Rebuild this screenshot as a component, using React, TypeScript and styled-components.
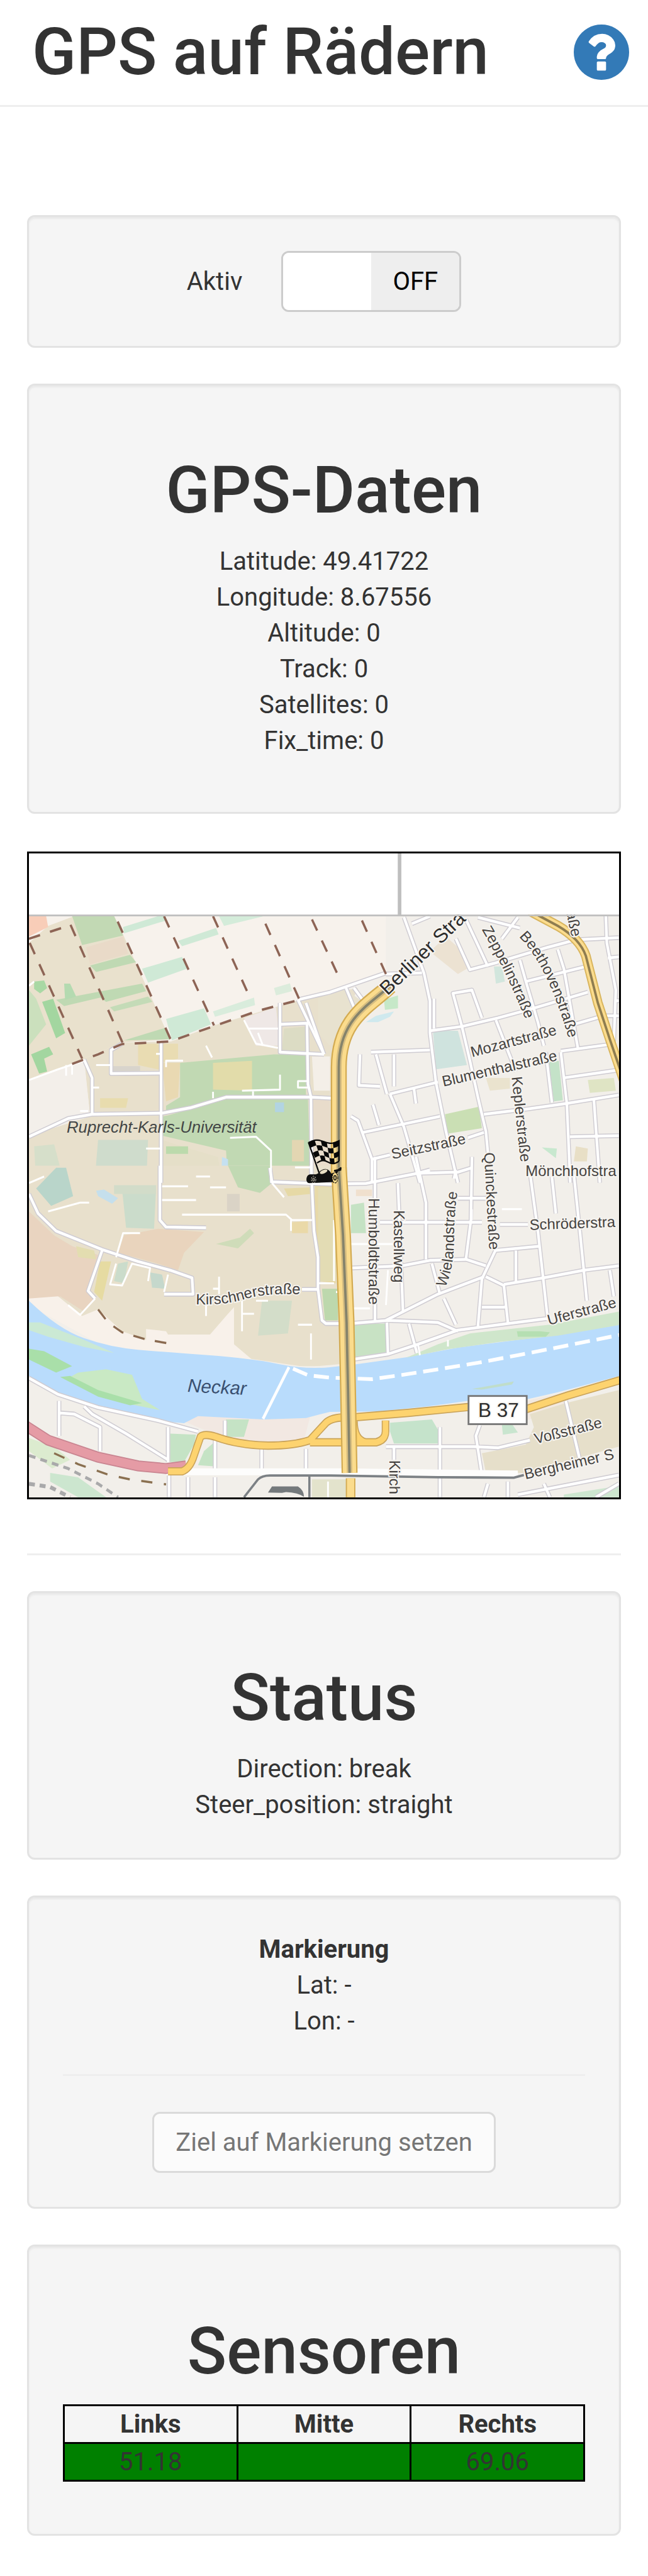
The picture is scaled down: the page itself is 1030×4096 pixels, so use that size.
import React, { useState } from "react";
import styled, { createGlobalStyle } from "styled-components";

const GlobalStyle = createGlobalStyle`
  *, *::before, *::after { box-sizing: border-box; }
  body {
    margin: 0;
    background: #fff;
    color: #333;
    font-family: Roboto, "Liberation Sans", sans-serif;
    font-size: 40px;
    line-height: 57px;
  }
`;

/* ---------- page frame ---------- */

const Header = styled.header`
  display: flex;
  align-items: center;
  justify-content: space-between;
  padding: 26px 30px 28px 51px;
  border-bottom: 3px solid #eee;
`;

const Title = styled.h1`
  margin: 0;
  font-size: 103px;
  line-height: 113px;
  font-weight: 500;
`;

const HelpLink = styled.a`
  display: flex;
  color: #337ab7;
`;

const HelpIcon = styled.svg`
  width: 88px;
  height: 88px;
  fill: currentColor;
`;

const Main = styled.main`
  display: flex;
  flex-direction: column;
  gap: 57px;
  padding: 172px 43px 61px;
`;

const Well = styled.section`
  padding: 54px;
  border: 3px solid #e3e3e3;
  border-radius: 12px;
  background: #f5f5f5;
  box-shadow: inset 0 3px 3px rgba(0, 0, 0, 0.05);
  text-align: center;
`;

const WellTitle = styled.h1`
  margin: 56px 0 28px;
  font-size: 103px;
  line-height: 113px;
  font-weight: 500;
`;

const Lines = styled.p<{ $spaced?: boolean }>`
  margin: 0 0 ${(p) => (p.$spaced ? "31px" : "2px")};
`;

const Line = styled.span`
  display: block;
`;

const Rule = styled.hr`
  width: 100%;
  height: 3px;
  margin: 0;
  border: 0;
  background: #eee;
`;

/* ---------- switch ---------- */

const SwitchRow = styled.div`
  display: flex;
  align-items: center;
  justify-content: center;
  gap: 62px;
`;

const SwitchTrack = styled.span`
  position: relative;
  display: flex;
  width: 286px;
  height: 97px;
  overflow: hidden;
  border: 3px solid #ccc;
  border-radius: 12px;
`;

const SwitchHalf = styled.span<{ $kind: "knob" | "off" | "on" }>`
  display: flex;
  flex: 1;
  align-items: center;
  justify-content: center;
  background: ${(p) => ({ knob: "#fff", off: "#eee", on: "#337ab7" })[p.$kind]};
  color: ${(p) => (p.$kind === "on" ? "#fff" : "#000")};
`;

const SwitchInput = styled.input`
  position: absolute;
  inset: 0;
  width: 100%;
  height: 100%;
  margin: 0;
  opacity: 0;
  cursor: pointer;
`;

/* ---------- map ---------- */

const MapFrame = styled.figure`
  margin: 3px 0 29px;
  border: 3px solid #000;
`;

const MapDrawing = styled.svg`
  display: block;
  width: 100%;
  height: auto;
`;

const Casing = styled.g`
  fill: none;
  stroke: #cfccd2;
  stroke-linejoin: round;
`;

const Surface = styled.g`
  fill: none;
  stroke: #fff;
  stroke-linejoin: round;
`;

const Street = styled.text`
  font-family: "Liberation Sans", Arial, sans-serif;
  font-size: 25px;
  fill: #45423f;
  stroke: #f6f4f0;
  stroke-width: 4px;
  paint-order: stroke;
`;

const Place = styled(Street)`
  font-size: 27px;
  font-style: italic;
  fill: #434646;
  stroke: none;
`;

const Water = styled(Place)`
  font-size: 31px;
  fill: #3a5070;
`;

const BigStreet = styled(Street)`
  font-size: 33px;
  fill: #2c2c2c;
`;

/* ---------- marker and sensors ---------- */

const MarkRule = styled(Rule)`
  margin: 56px 0 57px;
`;

const TargetButton = styled.button`
  padding: 17px 34px;
  border: 3px solid #ccc;
  border-radius: 12px;
  background: #fff;
  color: #333;
  font: inherit;
  opacity: 0.65;
  vertical-align: top;
`;

const SensorTable = styled.table`
  width: 100%;
  margin-bottom: 29px;
  border-collapse: collapse;
  table-layout: fixed;
`;

const HeadCell = styled.th`
  padding: 0;
  border: 3px solid #000;
  font-weight: 700;
`;

const ValueCell = styled.td`
  height: 60px;
  padding: 0;
  border: 3px solid #000;
  background: #008000;
`;

/* ---------- map data ---------- */

type Sheet = "nw" | "ne" | "sw" | "se";
type Area = [fill: string, d: string];

const SHEETS: Record<Sheet, string> = {
  nw: "translate(30 1400) scale(0.3333 0.3571)",
  ne: "translate(530 1400) scale(0.3333 0.3571)",
  sw: "translate(30 1950) scale(0.3333 0.3635)",
  se: "translate(530 1950) scale(0.3333 0.3635)",
};
const ORDER: Sheet[] = ["nw", "ne", "sw", "se"];

const AREAS: Record<Sheet, Area[]> = {
  nw: [
    ["#f7f2ec", "M54 355H1840V620L1410 745L980 865L765 940L54 1120Z"],
    ["#e8e0cc", "M54 1380L360 1290L330 1020L520 945L765 940L980 865L1410 745L1700 690L1600 900L1575 1100V1600H54Z"],
    ["#e9e1cd", "M54 480L150 400L280 355H480L525 440L640 680L760 930L520 945L330 1020L54 1120Z"],
    ["#f8cdb8", "M54 355H140L150 405L54 450Z"],
    ["#c2d9b4", "M270 355H480L525 445L320 490Z"],
    ["#bfd9b3", "M360 585L560 535L590 570L390 615Z"],
    ["#bfd9b3", "M190 745L620 670L640 705L440 755L410 735L230 775Z"],
    ["#c4dbb7", "M460 780L650 730L672 755L480 800Z"],
    ["#bfd9b3", "M530 935L740 875L760 930Z"],
    ["#e9dac8", "M340 500L525 450L550 530L360 580Z"],
    ["#cfe9d6", "M525 405L700 355H735L740 375L530 435Z"],
    ["#cfe9d6", "M800 470L990 410L1003 440L820 495Z"],
    ["#cfe9d6", "M620 600L820 545L845 600L650 665Z"],
    ["#cfe9d6", "M740 835L930 785L965 860L770 935Z"],
    ["#d4ecda", "M1005 355H1230L1030 400Z"],
    ["#d9ecdc", "M975 800L1180 735L1185 770L985 825Z"],
    ["#dcecdc", "M1280 690L1360 668L1370 705L1290 725Z"],
    ["#cbe0bd", "M54 700L90 740L140 860L54 960Z"],
    ["#a9d8a4", "M80 660L130 655L145 690L110 715L80 695Z"],
    ["#a3d6a0", "M120 755L175 740L235 900L190 925Z"],
    ["#a3d6a0", "M65 1000L155 965L175 1000L130 1020L145 1080L105 1090Z"],
    ["#b4dab0", "M230 670H260L290 730L235 745Z"],
    ["#f3efea", "M54 1120L330 1030L360 1290L54 1380Z"],
    ["#c1d9b3", "M810 1040L1280 1000H1440V1200H1040L960 1215L740 1270V1240L810 1200Z"],
    ["#c1d9b3", "M750 1285L1040 1210H1450L1462 1600H1050L1040 1450L720 1380V1290Z"],
    ["#e2dcaa", "M975 1040L1170 1030V1170L975 1165Z"],
    ["#e9d9b2", "M720 1040H810L800 1200L740 1220Z"],
    ["#e9dcb2", "M600 950H800V1020L720 1040V1075L600 1050Z"],
    ["#e8dcae", "M410 1205H550L540 1250H410Z"],
    ["#d8d4cc", "M470 1055H610V1082H470Z"],
    ["#cfdccc", "M400 1400H650L640 1620H380Z"],
    ["#d6dfca", "M80 1430L180 1420L230 1600H90Z"],
    ["#b2d4e2", "M1285 1225H1330V1270H1285Z"],
    ["#e5dfc8", "M720 1400L820 1430L1000 1480L1020 1600H730Z"],
    ["#bcdaac", "M740 1430H850V1465H740Z"],
    ["#c5e0f0", "M1020 1480L1050 1490V1600H1015Z"],
    ["#efe8e6", "M1130 830L1290 780L1310 960H1190Z"],
    ["#dcdcc4", "M1330 880L1440 870V985H1320Z"],
    ["#f4efe8", "M1470 1010H1560V1170H1480Z"],
    ["#e3d6b2", "M1370 1400H1430V1500H1370Z"],
  ],
  ne: [
    ["#e8e2cf", "M0 740L130 690L230 760L110 880L60 960L0 900Z"],
    ["#ece2d2", "M640 450L700 500L745 600L700 625L560 520Z"],
    ["#e8dccb", "M-30 1210H60V1600H-30Z"],
    ["#cfe3de", "M575 890H700L745 1050L590 1070Z"],
    ["#cadfb4", "M635 1280L805 1245L820 1345L650 1370Z"],
    ["#c4e2c8", "M1155 1035L1205 1030L1225 1215L1180 1220Z"],
    ["#d2e6dd", "M880 590H920L935 660L890 670Z"],
    ["#c6e8c8", "M330 745L400 725V785L335 792Z"],
    ["#cfe9ee", "M240 850L290 820L380 800L360 825L300 850Z"],
    ["#dfe4c4", "M1350 1120L1480 1110L1490 1170L1360 1180Z"],
    ["#c8e8cf", "M1120 1435L1195 1440L1190 1485Z"],
    ["#e8dfc6", "M1290 1430L1350 1440L1345 1500L1280 1500Z"],
    ["#eae3ce", "M840 1110H960V1160L860 1170Z"],
  ],
  sw: [
    ["#e8e0cc", "M54 -20H1620V890L1450 905L1150 865L750 830L450 810L54 600Z"],
    ["#b9d5ca", "M90 85L190 -10H240L275 120L165 165Z"],
    ["#cbdccb", "M520 90L690 85L680 270L540 265Z"],
    ["#d2dcc9", "M480 70H690V110H480Z"],
    ["#c5dfec", "M390 95L430 90L500 130L470 155L400 120Z"],
    ["#c1d9b3", "M1050 -20H1262L1270 60L1210 105L1100 80Z"],
    ["#e9d4c0", "M54 190L180 300L270 350L400 390L350 550L380 600L330 650L210 580L120 610L54 590Z"],
    ["#e9d4bd", "M530 300L700 270L930 285L830 380L800 460L700 430L500 380Z"],
    ["#e3ddb0", "M290 350L380 370L390 410L300 400Z"],
    ["#e6dba2", "M410 420H465L420 600L380 560Z"],
    ["#e6d9a6", "M1330 85L1460 80V110L1350 120Z"],
    ["#e7d9a8", "M1485 60L1590 30V520L1510 510L1480 220Z"],
    ["#ead9a8", "M1370 240L1450 235V290H1370Z"],
    ["#cfdcb9", "M990 340L1110 310L1160 270L1180 290L1100 360Z"],
    ["#d3ddc9", "M1220 600H1370L1350 750L1200 760Z"],
    ["#cbdccb", "M500 430L550 420L530 520L480 510Z"],
    ["#c5d8cc", "M660 470L720 480L735 545L670 540Z"],
    ["#dad3c6", "M1045 110H1108V190H1045Z"],
    ["#bdd8ad", "M1520 545H1600V690H1535Z"],
    ["#f8f1ea", "M54 590L200 580L320 670L400 640L520 740L640 780V730L740 740L750 755H960L1050 660L1080 630V800L1170 870L750 840L450 820L54 620Z"],
    ["#f2efea", "M54 900H3050V1520H54Z"],
    ["#f2e8e2", "M820 1150L900 1125L1460 1135L1430 1240L1200 1250L1000 1220Z"],
    ["#b9dcfc", "M54 600Q200 730 330 772T600 825T950 850T1300 890T1560 905L1680 893L1940 860L2200 815L2500 780L2700 758L3010 710V945L2700 1020L2500 1062L2250 1060L2050 1085L1800 1108L1560 1110L1440 1138L1230 1145L900 1130L830 1162L740 1155L500 1112L300 1070L150 1010L54 945Z"],
    ["#cbe9d4", "M54 700H110L330 780L480 840L330 812L150 765L54 735Z"],
    ["#a9dfa9", "M54 820L130 832L270 900L190 930L54 870Z"],
    ["#c9e9c4", "M260 950L300 930L440 915L570 940L620 1050L710 1102L560 1075L400 1030Z"],
    ["#a9dfa9", "M210 950L260 945L400 1010L620 1070L560 1080L400 1040Z"],
    ["#c5e3c5", "M760 1210L890 1215L880 1260L830 1340H760Z"],
    ["#c5e3c5", "M1040 1145H1155L1130 1225H1035Z"],
    ["#c5e3c5", "M930 1290L980 1250V1360L900 1355Z"],
    ["#dcebcf", "M54 1230L180 1270L260 1330L170 1370L54 1290Z"],
    ["#cce6cf", "M160 1390L300 1410L440 1502H300L160 1430Z"],
    ["#e3e3cc", "M1470 1420H1640V1502H1470Z"],
  ],
  se: [
    ["#e3dcb4", "M0 80H80L90 510H0Z"],
    ["#c5e2c4", "M165 160L230 150L240 290H165Z"],
    ["#c8e2c4", "M165 710L335 705L345 835L170 860Z"],
    ["#cfe6cb", "M440 862L600 800L760 750L1160 710L1505 650V712L1200 760L900 790L650 822Z"],
    ["#b5dfb2", "M995 740H1110L1160 745L1140 765H1000Z"],
    ["#c5e3cb", "M360 1160L570 1145L605 1200V1255H380L360 1200Z"],
    ["#c9e5cf", "M920 1170L970 1165L1000 1205L925 1215Z"],
    ["#f2e9e0", "M1045 1060L1240 1020V1080L1045 1150Z"],
    ["#e6dfca", "M820 1300L1040 1260L1080 1180L1060 1120L1240 1070L1505 1010V1270L1030 1390H840Z"],
    ["#c0ddca", "M770 1005L980 970L970 985L820 1008Z"],
    ["#f0e0ce", "M190 90H270V120H190Z"],
    ["#cde6cf", "M1230 1490L1505 1450V1502H1230Z"],
  ],
};

const ROADS: Record<Sheet, string[]> = {
  nw: [
    "M54 1385L250 1300L370 1280L720 1275L860 1250L1040 1200H1460L1570 1205",
    "M330 1025L370 1110V1280",
    "M715 940V1600",
    "M520 950L465 980V1090L715 1088",
    "M1400 745L1530 1000",
    "M1400 745L1560 710L1840 620",
    "M1310 760V990L1530 1000",
    "M1310 860L1445 855L1450 1140L1465 1200L1468 1600",
  ],
  ne: [
    "M430 360L530 620L560 750V900L590 1130L640 1360L700 1600",
    "M340 625L520 620",
    "M740 370L850 590",
    "M690 460L760 605L880 575L1150 500L1290 465L1505 455",
    "M1000 360L920 460M800 360L1010 410M470 390L560 355",
    "M720 870L675 715L770 700L820 830",
    "M560 890L720 870L900 830L1060 790L1350 710",
    "M720 870L760 1030L800 1200L840 1360L850 1460",
    "M265 990L560 980M210 1000L205 1145L310 1150M380 1000V1150M290 1000L345 1185",
    "M360 1185L600 1130M1215 985L1450 955",
    "M360 1185L430 1340L510 1600",
    "M225 1365L430 1325L610 1290",
    "M165 1290L200 1310L270 1490V1600",
    "M270 1490L360 1470M750 1390L830 1365",
    "M480 1160L490 1230M275 1235L305 1330",
    "M830 1280L1050 1255L1240 1230L1505 1190",
    "M890 840L990 1080",
    "M1010 560L1040 660L1340 590M1040 660L1100 850L1130 960",
    "M1200 510L1230 600L1300 970M1280 860L1430 820H1505",
    "M1140 990L1170 1225M1215 990L1245 1230L1262 1600",
    "M1230 1110L1490 1075M1380 1210L1410 1600M1260 1385L1505 1380",
    "M1440 355L1445 480L1490 700L1480 940M1450 550L1505 545M1490 750H1505",
    "M140 690L180 780M180 690L235 760M-60 760L30 1000",
    "M580 740V880",
  ],
  sw: [
    "M54 110L100 200L190 280L420 365L600 420L760 460L870 495L875 570H730",
    "M420 370L350 555L385 590",
    "M709 -20V230L740 262L940 265",
    "M1260 -10L1270 55L1560 65L1740 62L2000 15L2060 0",
    "M1465 -20L1480 280L1500 400V545L1520 690L1540 705H1620",
    "M1420 548H1500",
    "M54 955L200 1030L400 1090L700 1150L900 1200",
    "M205 1060V1220M210 1115L280 1120L410 1180V1290",
    "M330 1085L370 1120L540 1210L750 1330M750 1180V1340",
    "M985 1240V1385M1218 1280V1385M1440 1280V1385M1035 1150V1230",
    "M755 1400V1502M850 1410V1502M985 1410V1502",
  ],
  se: [
    "M500 15L700 10L770 -10",
    "M285 -60V690M400 60L425 650",
    "M490 -60L540 150V410M770 -60L765 230L740 410",
    "M310 240H820M910 250H1050M1060 10L1100 280L1150 690M1170 30L1190 200M1280 20L1310 280L1345 600",
    "M160 450L420 440L560 415L740 410L840 440",
    "M890 365L820 500L800 720M840 490L930 530L950 700M820 630H935",
    "M340 690L600 570L830 490M630 590L690 710M570 430L610 570",
    "M160 705L350 690L600 700L700 740",
    "M170 870L350 845L500 800L700 735L950 705L1160 680",
    "M930 525L1130 495L1330 460L1505 440M880 370L1110 350M990 370V510M1460 460L1480 580",
    "M345 700L350 840M455 705L495 840M700 130H850M690 0L680 40",
    "M340 1270H780L900 1275L1060 1240M610 1180V1502M810 1170L790 1220L820 1400",
    "M1240 1060L1310 1330M380 1270V1330M830 1502L850 1440M950 1430V1502",
    "M1130 1440L1160 1502M1000 1490L1505 1400M1390 1502L1505 1440",
  ],
};

const LANES: Record<Sheet, string> = {
  nw: "M1130 840L1190 950L1300 970M1150 880H1300M1200 900L1225 960M1450 1125H1400V1155H1450M1120 1170L1310 1165V1095M975 1175V1205M1175 1170V1200M740 1060V1030H825M690 998H720M54 1120L200 1070L330 1030M1060 1390L1190 1385L1265 1450V1600M640 1440H715M1385 1528H1460M370 1155H405M310 1265H350M390 1050H460M240 1050V1100M270 1045V1095M54 680L80 660M940 960L970 1015",
  ne: "",
  sw: "M490 400L525 290H610M720 138H890M720 75H850M890 30H960M960 80H1040M1120 600V740M1120 660H1180M1465 750V870M940 610V670M1005 490V570M975 545H1005M820 205H1340L1370 230H1470M1365 230V280M150 190L310 150H355M730 560L750 480M490 430L460 525L520 530L570 430L660 450L650 510M1270 60L1330 125M54 60L130 30M1400 710H1470M1190 600H1250M385 590L310 665L250 620",
  se: "M160 340H420M160 560H90M160 635H260M350 460L340 620M650 780V810M500 800L510 850M0 520H80M80 230V510M770 180V230M920 180H1020M50 1430V1502",
};

const TRACKS: string[] = [
  "M54 460L260 397",
  "M58 480L320 1020",
  "M262 395L522 945",
  "M498 380L765 935",
  "M730 355L980 865",
  "M975 355L1145 705",
  "M1237 390L1405 740",
  "M1470 370L1600 630",
  "M1720 375L1840 625",
  "M270 1045L400 1000L520 952L760 940L980 868L1200 797L1410 745",
];

const BERLINER_N = "M360 680C260 770 105 830 104 1060V1560";
const BERLINER_S = "M104 -10L125 300L143 700L150 1000L158 1390";
const EAST_ROAD = "M1060 330L1200 400Q1310 460 1340 540L1400 760L1460 930L1540 1150";
const B37_ROADS =
  "M750 1383H820Q860 1370 880 1310L912 1225Q930 1208 990 1225Q1100 1262 1250 1265Q1380 1265 1460 1240L1540 1160Q1570 1135 1640 1135H1680L1950 1115L2250 1088L2540 1098L2750 1035L3010 965M1460 1250H1790Q1838 1240 1838 1200V1150M1680 1150Q1680 1240 1740 1250";

/* straight labels: x, y, turn, text */
const LABELS: [number, number, number, string][] = [
  [787, 1762, -15, "Mozartstraße"],
  [739, 1811, -13, "Blumenthalstraße"],
  [654, 1932, -12, "Seitzstraße"],
  [853, 1795, 84, "Keplerstraße"],
  [876, 1960, 0, "Mönchhofstra"],
  [883, 2050, -2, "Schröderstra"],
  [807, 1921, 87, "Quinckestraße"],
  [614, 1997, 90, "Humboldtstraße"],
  [656, 2017, 90, "Kastellweg"],
  [915, 2209, -15, "Uferstraße"],
  [893, 2407, -14, "Voßstraße"],
  [876, 2466, -13, "Bergheimer S"],
  [649, 2434, 90, "Kirch"],
  [944, 1520, 78, "aße"],
];

/* labels that bend with their street: id, line, text */
const BENT: [string, string, string][] = [
  ["zeppelin", "M803 1549Q848 1625 882 1715", "Zeppelinstraße"],
  ["beethoven", "M865 1561Q915 1610 952 1745", "Beethovenstraße"],
  ["wieland", "M742 2146Q757 2115 757 2060T768 1960", "Wielandstraße"],
  ["kirschner", "M326 2174Q375 2176 410 2165T512 2158", "Kirschnerstraße"],
];

const Sheets = ({ draw }: { draw: (sheet: Sheet) => React.ReactNode }) => (
  <>
    {ORDER.map((s) => (
      <g key={s} transform={SHEETS[s]}>
        {draw(s)}
      </g>
    ))}
  </>
);

const flagPoint = (u: number, v: number) => {
  const x = 103 + 152 * u + 42 * v * (1 - u);
  const y = 103 - 9 * u + 102 * v - 10 * Math.sin(2 * Math.PI * u);
  return `${x.toFixed(1)} ${y.toFixed(1)}`;
};

const flagCells = () => {
  const cells: string[] = [];
  for (let row = 0; row < 4; row++) {
    for (let col = 0; col < 5; col++) {
      if ((row + col) % 2) continue;
      const [a, b, m] = [col / 5, (col + 1) / 5, (col + 0.5) / 5];
      const [t, d] = [row / 4, (row + 1) / 4];
      cells.push(
        `M${[flagPoint(a, t), flagPoint(m, t), flagPoint(b, t), flagPoint(b, d), flagPoint(m, d), flagPoint(a, d)].join("L")}Z`
      );
    }
  }
  return cells.join("");
};

const flagEdge = (v: number) =>
  Array.from({ length: 21 }, (_, i) => flagPoint(i / 20, v)).join("L");

const Racer = () => (
  <g transform="translate(480 1870) scale(0.3333)">
    <path d={flagCells()} fill="#080808" />
    <path
      d={`M${flagEdge(0)}L${flagPoint(1, 1)}M${flagEdge(1)}M102 101L158 262`}
      fill="none"
      stroke="#080808"
      strokeWidth="7"
    />
    <path
      d="M92 290Q92 266 110 262H140L152 256Q164 236 188 235Q208 238 216 258L240 252L229 247L231 240L250 236L262 226L268 228L266 243L250 247L244 262V300L105 306Q94 304 92 290Z"
      fill="#101010"
    />
    <ellipse cx="178" cy="249" rx="20" ry="9" transform="rotate(-22 178 249)" fill="#e9dfc4" />
    <g fill="#111" stroke="#f1ead8" strokeWidth="3">
      <ellipse cx="128" cy="288" rx="11" ry="17" strokeDasharray="7 5" />
      <ellipse cx="128" cy="288" rx="4" ry="8" />
      <ellipse cx="235" cy="279" rx="14" ry="26" fill="#fbdc8d" stroke="#111" strokeWidth="4" strokeDasharray="8 4" />
      <ellipse cx="235" cy="279" rx="6" ry="11" fill="#fbdc8d" stroke="#111" strokeWidth="5" />
    </g>
  </g>
);

const CityMap = () => (
  <MapDrawing viewBox="48 1422 984 1074" role="img" aria-label="Karte">
    <rect x="48" y="1422" width="984" height="1074" fill="#f2efea" />
    <Sheets draw={(s) => AREAS[s].map(([fill, d], i) => <path key={i} fill={fill} d={d} />)} />

    <Casing strokeWidth="22">
      <Sheets draw={(s) => ROADS[s].map((d, i) => <path key={i} d={d} />)} />
    </Casing>
    <Surface strokeWidth="13">
      <Sheets draw={(s) => ROADS[s].map((d, i) => <path key={i} d={d} />)} />
    </Surface>
    <Surface strokeWidth="9">
      <Sheets draw={(s) => <path d={LANES[s]} />} />
    </Surface>

    <g transform={SHEETS.nw} fill="none" stroke="#8d6455" strokeWidth="11" strokeDasharray="58 52">
      {TRACKS.map((d) => (
        <path key={d} d={d} />
      ))}
    </g>

    <g transform={SHEETS.sw} fill="none">
      <path d="M740 1385H1620L2500 1395" stroke="#fdfdfc" strokeWidth="32" />
      <path
        d="M1130 1502L1200 1420Q1220 1402 1260 1402H1560L2100 1410L2480 1412L2530 1400M1457 1400V1502"
        stroke="#7c8185"
        strokeWidth="11"
      />
      <path d="M1250 1480L1270 1452H1400Q1430 1470 1430 1500Q1400 1480 1340 1478L1320 1482Z" fill="#74797c" />
      <path d="M1355 905L1225 1142" stroke="#fff" strokeWidth="14" />
      <path
        d="M1375 912L1450 942L1560 953L1770 960L1910 942L2100 915L2300 885L2500 850L2750 805L3010 757"
        stroke="#fff"
        strokeWidth="17"
        strokeDasharray="76 34"
      />
      <path d="M400 640L450 700L520 745L640 778L760 797" stroke="#8a6a50" strokeWidth="10" strokeDasharray="58 52" />
      <path d="M180 1300L300 1350L450 1398L560 1420L740 1443" stroke="#8a7050" strokeWidth="10" strokeDasharray="56 58" />
      <path d="M54 1310L250 1370L400 1440L500 1502" stroke="#a9a9aa" strokeWidth="14" strokeDasharray="34 26" />
      <path d="M54 1440L160 1455L260 1502" stroke="#a9a9aa" strokeWidth="18" strokeDasharray="30 24" />
      <path d="M40 1175L150 1240L400 1318L600 1358L740 1370L840 1358" stroke="#c98591" strokeWidth="50" />
      <path d="M40 1175L150 1240L400 1318L600 1358L740 1370L840 1358" stroke="#e59ba5" strokeWidth="40" />
      <path d={B37_ROADS} stroke="#c9a35a" strokeWidth="38" />
      <path d={B37_ROADS} stroke="#fdd36f" strokeWidth="28" />
    </g>

    {(
      [
        ["ne", BERLINER_N],
        ["se", BERLINER_S],
      ] as [Sheet, string][]
    ).map(([sheet, d]) => (
      <g key={sheet} transform={SHEETS[sheet]} fill="none">
        <path d={d} stroke="#d3ab52" strokeWidth="80" />
        <path d={d} stroke="#fbdc8d" strokeWidth="66" />
        <path d={d} stroke="#d6bd80" strokeWidth="28" />
        <path d={d} stroke="#85836b" strokeWidth="12" />
      </g>
    ))}
    <g transform={SHEETS.se} fill="none">
      <path d="M163 1415V1502" stroke="#d3ab52" strokeWidth="48" />
      <path d="M163 1415V1502" stroke="#fbdc8d" strokeWidth="36" />
    </g>
    <g transform={SHEETS.ne} fill="none">
      <path d={EAST_ROAD} stroke="#d8b45c" strokeWidth="48" />
      <path d={EAST_ROAD} stroke="#fbdc8d" strokeWidth="36" />
      <path d={EAST_ROAD} stroke="#8f7d50" strokeWidth="12" />
    </g>

    {LABELS.map(([x, y, turn, text]) => (
      <Street key={text} transform={`translate(${x} ${y}) rotate(${turn})`}>
        {text}
      </Street>
    ))}
    {BENT.map(([id, line, text]) => (
      <React.Fragment key={id}>
        <path id={id} d={line} fill="none" />
        <Street>
          <textPath href={`#${id}`}>{text}</textPath>
        </Street>
      </React.Fragment>
    ))}
    <BigStreet transform="translate(646 1660) rotate(-44)">Berliner Stra</BigStreet>
    <Place x="111" y="1888">
      Ruprecht-Karls-Universität
    </Place>
    <Water transform="translate(312 2320) rotate(3)">Neckar</Water>

    <rect x="781" y="2327" width="97" height="47" fill="#fff" stroke="#777" strokeWidth="3" />
    <BigStreet x="797" y="2362">
      B 37
    </BigStreet>

    <Racer />

    <rect x="48" y="1422" width="984" height="102" fill="#fff" />
    <path d="M48 1525.500H1032" stroke="#bfbfbf" strokeWidth="3" />
    <path d="M666 1422V1525" stroke="#bfbfbf" strokeWidth="6" />
  </MapDrawing>
);

/* ---------- page ---------- */

const GPS = [
  ["Latitude", "49.41722"],
  ["Longitude", "8.67556"],
  ["Altitude", "0"],
  ["Track", "0"],
  ["Satellites", "0"],
  ["Fix_time", "0"],
];

export default function App() {
  const [active, setActive] = useState(false);
  return (
    <>
      <GlobalStyle />
      <Header>
        <Title>GPS auf Rädern</Title>
        <HelpLink href="#hilfe" aria-label="Hilfe">
          <HelpIcon viewBox="128 128 1536 1536" aria-hidden="true">
            <path d="M1024 1376v-192q0-14-9-23t-23-9h-192q-14 0-23 9t-9 23v192q0 14 9 23t23 9h192q14 0 23-9t9-23zm256-672q0-88-55.500-163t-138.500-116-170-41q-243 0-371 213-15 24 8 42l132 100q7 6 19 6 16 0 25-12 53-68 86-92 34-24 86-24 48 0 85.500 26t37.500 59q0 38-20 61t-68 45q-63 28-115.500 86.500t-52.500 125.500v36q0 14 9 23t23 9h192q14 0 23-9t9-23q0-19 21.500-49.500t54.500-49.500q32-18 49-28.500t46-35 44.500-48 28-60.500 12.500-81zm384 192q0 209-103 385.500t-279.500 279.500-385.500 103-385.500-103-279.500-279.500-103-385.500 103-385.500 279.500-279.500 385.500-103 385.500 103 279.500 279.500 103 385.500z" />
          </HelpIcon>
        </HelpLink>
      </Header>

      <Main>
        <Well>
          <SwitchRow>
            <label htmlFor="aktiv">Aktiv</label>
            <SwitchTrack>
              <SwitchHalf $kind={active ? "on" : "knob"}>{active ? "ON" : ""}</SwitchHalf>
              <SwitchHalf $kind={active ? "knob" : "off"}>{active ? "" : "OFF"}</SwitchHalf>
              <SwitchInput
                id="aktiv"
                type="checkbox"
                role="switch"
                checked={active}
                onChange={(e) => setActive(e.target.checked)}
              />
            </SwitchTrack>
          </SwitchRow>
        </Well>

        <Well>
          <WellTitle>GPS-Daten</WellTitle>
          <Lines $spaced>
            {GPS.map(([name, value]) => (
              <Line key={name}>
                {name}: {value}
              </Line>
            ))}
          </Lines>
        </Well>

        <MapFrame>
          <CityMap />
        </MapFrame>

        <Rule />

        <Well>
          <WellTitle>Status</WellTitle>
          <Lines>
            <Line>Direction: break</Line>
            <Line>Steer_position: straight</Line>
          </Lines>
        </Well>

        <Well>
          <Lines>
            <Line as="strong">Markierung</Line>
            <Line>Lat: -</Line>
            <Line>Lon: -</Line>
          </Lines>
          <MarkRule />
          <TargetButton type="button" disabled>
            Ziel auf Markierung setzen
          </TargetButton>
        </Well>

        <Well>
          <WellTitle>Sensoren</WellTitle>
          <SensorTable>
            <thead>
              <tr>
                <HeadCell scope="col">Links</HeadCell>
                <HeadCell scope="col">Mitte</HeadCell>
                <HeadCell scope="col">Rechts</HeadCell>
              </tr>
            </thead>
            <tbody>
              <tr>
                <ValueCell>51.18</ValueCell>
                <ValueCell />
                <ValueCell>69.06</ValueCell>
              </tr>
            </tbody>
          </SensorTable>
        </Well>
      </Main>
    </>
  );
}
